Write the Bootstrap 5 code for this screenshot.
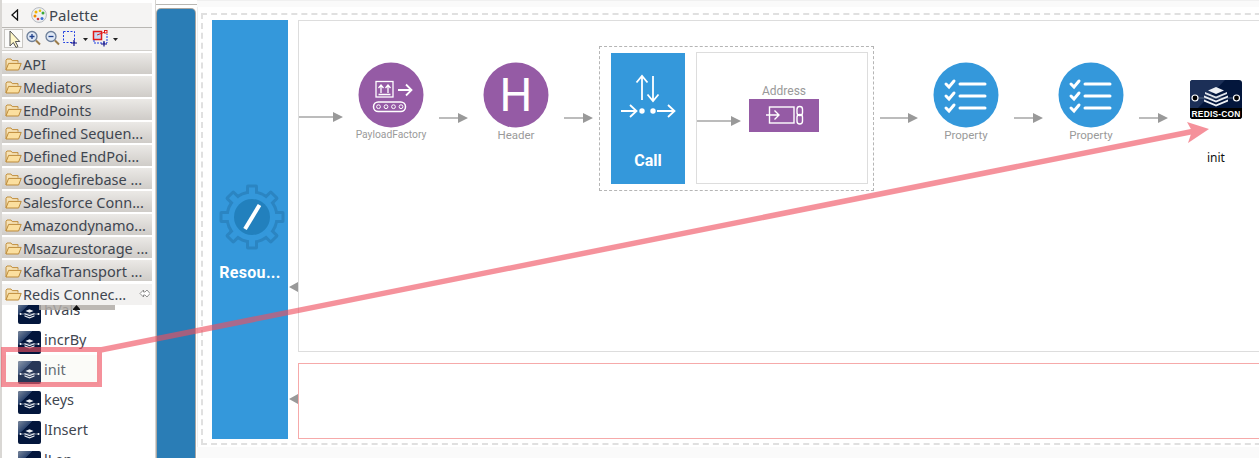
<!DOCTYPE html>
<html lang="en">
<head>
<meta charset="utf-8">
<title>Palette</title>
<link href="https://cdn.jsdelivr.net/npm/bootstrap@5.3.0/dist/css/bootstrap.min.css" rel="stylesheet">
<style>
html,body{height:458px;overflow:hidden;background:#fff}
.page-wrap{width:1259px;height:458px;font-family:"Noto Sans","Open Sans",sans-serif;color:#3f4650}
.palette{height:458px;background:#fff;border-left:2px solid #d9d7d4;overflow:hidden;flex:none;padding-right:3px;border-right:1px solid #d5d3d0;box-sizing:content-box;width:150px}
.pal-head{height:25px;margin-top:3px;background:#f5f4f3;border-bottom:1px solid #b9b7b3;font-size:15px;padding-left:9px;gap:12px}
.pal-head span{margin-left:-10px}
.pal-tools{height:23px;background:#f2f1f0;border-bottom:1px solid #d2d0cc;position:relative}
.pal-tools svg{display:block}
.drawer{height:22px;margin-top:1px;background:linear-gradient(#ebe9e6,#cfccc8);border-top:1px solid #fff;font-size:14.5px;padding:2px 0 0 3px;gap:1px;white-space:nowrap;position:relative;z-index:2}
.drawer svg{margin-top:-1px}
.drawer.is-open{background:#f2f1f0;margin-top:2px;padding-top:1px;padding-bottom:1px}
.drawer .pin-btn{position:absolute;left:137px;top:5px;margin:0}
.tool-list{margin-top:-10px;position:relative;z-index:1}
.tool-row{height:30px;padding-left:16px;gap:3px;font-size:14.5px;background:#fff}
.tool-row svg{margin-top:4px}
.tool-row.is-hover{background:#fbfbf8;color:#656b73;width:97px}
.tool-row.is-hover svg{opacity:.85}
.scroll-tip{position:absolute;left:37px;top:8px;width:76px;height:7px;background:rgba(176,172,167,.85);z-index:1}
.scroll-tip svg{position:absolute;left:34px;top:2px}
.rail{width:41px;height:451px;margin-top:4px;padding-top:4px;border-top:1px solid #b9b7b3;flex:none;background:#fff;position:relative}
.rail-fill{width:38px;height:450px;margin-left:1px;background:#2a7db6;border-radius:4px 4px 0 0;box-shadow:0 0 0 1px #a9a7a3}
.canvas{flex:1 1 auto;height:458px;overflow:hidden;background:#fafafa;padding:14px 0 0 4px;position:relative;border-top:1px solid #f0f0f0}
.canvas-sheet{position:absolute;left:0;top:6px;right:0;height:440px;background:#fff;border-left:1px solid #eee}
.dash-box{position:relative;width:1100px;height:432px;margin-top:-2px;border:2px dashed #e0e0e0;padding:5px 9px 4px;gap:10px}
.res-box{width:76px;height:419px;background:#3498db;color:#fff;font:700 16px "Roboto",sans-serif;padding-top:164px;flex:none}
.res-box svg{margin-left:7px}
.res-box div{margin-top:13px;letter-spacing:.3px}
.seq-col{width:1000px;gap:11px}
.seq-box{height:332px;border:1px solid #ddd;background:#fff;position:relative}
.fault-box{height:76px;border:1px solid #f6aaaa;background:#fff}
.node{position:absolute;width:100px;text-align:center;font:11.5px "Roboto",sans-serif;color:#9a9a9a}
.node .disc{width:66px;height:66px;margin:0 auto}
.node .cap{margin-top:0;line-height:14px}
.node.pf .cap{font-size:10.3px}
.disc-letter{font:400 46px/66px "Roboto",sans-serif;fill:#fff}
.call-group{position:absolute;left:300px;top:25px;width:275px;height:145px;border:1px dashed #b5b5b5;padding:6px 5px 5px 11px;gap:11px}
.call-box{width:74px;height:131px;background:#3498db;color:#fff;font:700 16px "Roboto",sans-serif}
.call-box div{margin-top:8px}
.end-box{width:172px;height:132px;margin-top:-1px;border:1px solid #ddd;position:relative;background:#fff}
.addr{position:absolute;left:52px;top:30px;width:70px;text-align:center;font:12px/16px "Roboto",sans-serif;color:#999}
.addr-fill{height:33px;background:#955ba5}
.redis-node{position:absolute;left:891px;top:59px;width:52px;text-align:center;font:12px "Noto Sans",sans-serif;color:#111}
.redis-node div{margin-top:32px;line-height:14px}
.top-layer{position:absolute;left:0;top:0;z-index:5;pointer-events:none}
.redis-label{font:700 8.4px "Liberation Sans",sans-serif;fill:#fff;letter-spacing:.2px}
</style>
</head>
<body class="m-0 position-relative">
<svg width="0" height="0" class="position-absolute">
  <defs>
    <linearGradient id="sheen" x1="0" y1="0" x2="1" y2="1"><stop offset="0" stop-color="#7d8ba0"/><stop offset=".5" stop-color="#27406b"/><stop offset=".5" stop-color="#03163c"/></linearGradient>
    <symbol id="fold" viewBox="0 0 17 13">
      <path d="M1 12V2.200L2 1h4l1.200 1.600H13v2" fill="#f7e2b5" stroke="#c08f3e"/>
      <path d="M1 12l2.600-6.600h12.600L13.600 12z" fill="#fbdf9f" stroke="#bd8a39"/>
    </symbol>
    <symbol id="redis-mini" viewBox="0 0 23 23">
      <rect width="23" height="23" rx="2" fill="#03163c"/>
      <path d="M0 2Q0 0 2 0h13L0 14z" fill="url(#sheen)"/>
      <path d="M2 13h19" stroke="#aab3c2" stroke-width=".7"/>
      <circle cx="2.500" cy="13" r="1" fill="#fff"/><circle cx="20.500" cy="13" r="1" fill="#fff"/>
      <path d="M7.500 10l4-1.800 4 1.800-4 1.800zM6.500 12l5 2 5-2v1.200l-5 2-5-2zM6.500 14.200l5 2 5-2v1.200l-5 2-5-2z" fill="#e8ebf0"/>
    </symbol>
    <symbol id="prop" viewBox="0 0 66 66">
      <circle cx="33" cy="33" r="32.500" fill="#3498db"/>
      <g fill="none" stroke="#fff" stroke-linecap="round">
        <path d="M13 22l3 3 5-6M13 34l3 3 5-6M13 46l3 3 5-6" stroke-width="3"/>
        <path d="M27 22h25M27 34h25M27 46h25" stroke-width="3"/>
      </g>
    </symbol>
  </defs>
</svg>

<div class="page-wrap d-flex">
  <aside class="palette">
    <div class="pal-head d-flex align-items-center">
      <svg width="8" height="12" viewBox="0 0 8 12"><path d="M6.500 1L1 6l5.500 5z" fill="#fff" stroke="#111" stroke-width="1.300"/></svg>
      <svg width="16" height="16" viewBox="0 0 16 16"><circle cx="8" cy="8" r="7.400" fill="#eef0f2" stroke="#b5b9bf"/><circle cx="5" cy="5" r="1.500" fill="#f1b400"/><circle cx="9" cy="3.800" r="1.300" fill="#e2c400"/><circle cx="12" cy="6" r="1.500" fill="#39a838"/><circle cx="4" cy="9" r="1.500" fill="#f08a00"/><circle cx="7" cy="12" r="1.300" fill="#d43a3a"/><circle cx="11" cy="11.500" r="1.500" fill="#3a6fd4"/></svg>
      <span>Palette</span>
    </div>
    <div class="pal-tools">
      <svg width="118" height="22" viewBox="0 0 118 22">
        <rect x="2.500" y="1.500" width="18" height="18" fill="#fbfbfa" stroke="#c9c7c3"/>
        <path d="M8 3v15l3.300-3.500 2.700 5 2-1-2.700-5h4.500z" fill="#fff8c9" stroke="#555"/>
        <g fill="none" transform="translate(0 1)"><circle cx="30" cy="7.500" r="5" fill="#dfe8f5" stroke="#6d7f99" stroke-width="1.300"/><path d="M34 11.500l4 4" stroke="#9a7b4a" stroke-width="2"/><path d="M27.500 7.500h5M30 5v5" stroke="#1e3f8a" stroke-width="1.300"/>
        <circle cx="49" cy="7.500" r="5" fill="#dfe8f5" stroke="#6d7f99" stroke-width="1.300"/><path d="M53 11.500l4 4" stroke="#9a7b4a" stroke-width="2"/><path d="M46.500 7.500h5" stroke="#1e3f8a" stroke-width="1.300"/></g>
        <g fill="none"><rect x="61.500" y="3.500" width="11" height="11" stroke="#1f3fe0" stroke-dasharray="2 1.500"/><path d="M72 12v6M69 15h6" stroke="#14148a" stroke-width="1.200"/></g>
        <path d="M81 10h5l-2.500 3z" fill="#222"/>
        <g fill="none"><rect x="91.500" y="3.500" width="8" height="8" fill="#c8d8f4" stroke="#e01818" stroke-width="1.500"/><rect x="102.500" y="2.500" width="2.500" height="2.500" stroke="#e01818"/><path d="M95 7l8-3" stroke="#e01818"/><path d="M92 12v3h13V6" stroke="#1f3fe0" stroke-dasharray="2 1"/><path d="M102 13v5.500M99 16h6" stroke="#14148a" stroke-width="1.200"/></g>
        <path d="M111 10h5l-2.500 3z" fill="#222"/>
      </svg>
    </div>
    <div class="drawer d-flex align-items-center"><svg width="17" height="13"><use href="#fold"/></svg>API</div>
    <div class="drawer d-flex align-items-center"><svg width="17" height="13"><use href="#fold"/></svg>Mediators</div>
    <div class="drawer d-flex align-items-center"><svg width="17" height="13"><use href="#fold"/></svg>EndPoints</div>
    <div class="drawer d-flex align-items-center"><svg width="17" height="13"><use href="#fold"/></svg>Defined Sequen...</div>
    <div class="drawer d-flex align-items-center"><svg width="17" height="13"><use href="#fold"/></svg>Defined EndPoi...</div>
    <div class="drawer d-flex align-items-center"><svg width="17" height="13"><use href="#fold"/></svg>Googlefirebase ...</div>
    <div class="drawer d-flex align-items-center"><svg width="17" height="13"><use href="#fold"/></svg>Salesforce Conn...</div>
    <div class="drawer d-flex align-items-center"><svg width="17" height="13"><use href="#fold"/></svg>Amazondynamo...</div>
    <div class="drawer d-flex align-items-center"><svg width="17" height="13"><use href="#fold"/></svg>Msazurestorage ...</div>
    <div class="drawer d-flex align-items-center"><svg width="17" height="13"><use href="#fold"/></svg>KafkaTransport ...</div>
    <div class="drawer is-open d-flex align-items-center"><svg width="17" height="13"><use href="#fold"/></svg>Redis Connec...
      <svg class="pin-btn" width="11" height="9" viewBox="0 0 11 9"><path d="M4.500 1L1 4.500 4.500 8V6H6L8 8l3-3.500L8 1 6 3H4.500z" fill="#fff" stroke="#777" stroke-width=".8"/></svg>
    </div>
    <div class="tool-list">
      <div class="scroll-tip"><svg width="7" height="5" viewBox="0 0 7 5"><path d="M3.500 0L7 4v1H0V4z" fill="#111"/></svg></div>
      <div class="tool-row d-flex align-items-center"><svg width="23" height="23"><use href="#redis-mini"/></svg>hVals</div>
      <div class="tool-row d-flex align-items-center"><svg width="23" height="23"><use href="#redis-mini"/></svg>incrBy</div>
      <div class="tool-row is-hover d-flex align-items-center"><svg width="23" height="23"><use href="#redis-mini"/></svg>init</div>
      <div class="tool-row d-flex align-items-center"><svg width="23" height="23"><use href="#redis-mini"/></svg>keys</div>
      <div class="tool-row d-flex align-items-center"><svg width="23" height="23"><use href="#redis-mini"/></svg>lInsert</div>
      <div class="tool-row d-flex align-items-center"><svg width="23" height="23"><use href="#redis-mini"/></svg>lLen</div>
    </div>
  </aside>

  <div class="rail"><div class="rail-fill"></div></div>

  <main class="canvas">
    <div class="canvas-sheet"></div>
    <div class="dash-box d-flex">
      <div class="res-box text-center">
        <svg width="66" height="66" viewBox="-33 -33 66 66" class="d-block">
          <g fill="#2b85c2">
            <circle r="26.500"/>
            <rect x="-6" y="-32.500" width="12" height="12" rx="2"/>
            <rect x="-6" y="-32.500" width="12" height="12" rx="2" transform="rotate(45)"/>
            <rect x="-6" y="-32.500" width="12" height="12" rx="2" transform="rotate(90)"/>
            <rect x="-6" y="-32.500" width="12" height="12" rx="2" transform="rotate(135)"/>
            <rect x="-6" y="-32.500" width="12" height="12" rx="2" transform="rotate(180)"/>
            <rect x="-6" y="-32.500" width="12" height="12" rx="2" transform="rotate(225)"/>
            <rect x="-6" y="-32.500" width="12" height="12" rx="2" transform="rotate(270)"/>
            <rect x="-6" y="-32.500" width="12" height="12" rx="2" transform="rotate(315)"/>
          </g>
          <g fill="#3498db">
            <circle r="23.500"/>
            <rect x="-3" y="-29.500" width="6" height="10"/>
            <rect x="-3" y="-29.500" width="6" height="10" transform="rotate(45)"/>
            <rect x="-3" y="-29.500" width="6" height="10" transform="rotate(90)"/>
            <rect x="-3" y="-29.500" width="6" height="10" transform="rotate(135)"/>
            <rect x="-3" y="-29.500" width="6" height="10" transform="rotate(180)"/>
            <rect x="-3" y="-29.500" width="6" height="10" transform="rotate(225)"/>
            <rect x="-3" y="-29.500" width="6" height="10" transform="rotate(270)"/>
            <rect x="-3" y="-29.500" width="6" height="10" transform="rotate(315)"/>
          </g>
          <circle r="18" fill="#2280bd"/>
          <path d="M-7 12L7.500-12" stroke="#fff" stroke-width="4"/>
        </svg>
        <div>Resou...</div>
      </div>
      <div class="seq-col d-flex flex-column">
        <div class="seq-box">
          <div class="node pf" style="left:42px;top:41px">
            <svg class="disc d-block" viewBox="0 0 66 66">
              <circle cx="33" cy="33" r="32.500" fill="#955ba5"/>
              <g fill="none" stroke="#fff">
                <rect x="18" y="19.500" width="17" height="15.500" stroke-width="1.300"/>
                <path d="M23 31v-7M20.500 26l2.500-3 2.500 3M30 31v-7M27.500 26l2.500-3 2.500 3M20.500 32.500h12" stroke-width="1.300"/>
                <path d="M40 28h13M48 22.500l5.500 5.500-5.500 5.500" stroke-width="1.800"/>
                <rect x="15.500" y="40" width="32" height="9.500" rx="4.700" stroke-width="1.500"/>
                <circle cx="20.500" cy="44.700" r="1.900"/><circle cx="28" cy="44.700" r="1.900"/><circle cx="35.500" cy="44.700" r="1.900"/><circle cx="43" cy="44.700" r="1.900"/>
              </g>
            </svg>
            <div class="cap">PayloadFactory</div>
          </div>
          <div class="node" style="left:167px;top:41px">
            <svg class="disc d-block" viewBox="0 0 66 66">
              <circle cx="33" cy="33" r="32.500" fill="#955ba5"/>
              <text x="33" y="49" text-anchor="middle" class="disc-letter">H</text>
            </svg>
            <div class="cap">Header</div>
          </div>
          <div class="call-group d-flex">
            <div class="call-box text-center">
              <svg width="74" height="90" viewBox="0 0 74 90" class="d-block">
                <g fill="none" stroke="#fff" stroke-width="1.800">
                  <path d="M31 47V23M25.500 29.500L31 23l5.500 6.500"/>
                  <path d="M42 23v25M36.500 41.500L42 48l5.500-6.500"/>
                  <path d="M10 58h15M19 52l6.500 6-6.500 6"/>
                  <path d="M46 58h17M57 52l6.500 6-6.500 6"/>
                </g>
                <circle cx="31" cy="58" r="2.700" fill="#fff"/><circle cx="42" cy="58" r="2.700" fill="#fff"/>
              </svg>
              <div>Call</div>
            </div>
            <div class="end-box">
              <div class="addr">Address
                <div class="addr-fill">
                  <svg width="70" height="33" viewBox="0 0 70 33" class="d-block">
                    <g fill="none" stroke="#fff" stroke-width="1.400">
                      <rect x="20.500" y="8" width="24.500" height="16"/>
                      <path d="M17 16h13M25.500 11.500L30 16l-4.500 4.500"/>
                      <rect x="48" y="7.500" width="5.500" height="9" rx="2.700"/>
                      <rect x="48" y="15.500" width="5.500" height="9.500" rx="2.700"/>
                    </g>
                  </svg>
                </div>
              </div>
            </div>
          </div>
          <div class="node" style="left:617px;top:41px">
            <svg class="disc d-block"><use href="#prop"/></svg>
            <div class="cap">Property</div>
          </div>
          <div class="node" style="left:742px;top:41px">
            <svg class="disc d-block"><use href="#prop"/></svg>
            <div class="cap">Property</div>
          </div>
          <div class="redis-node">
            <svg width="52" height="39" viewBox="0 0 52 39" class="d-block">
              <rect width="52" height="39" rx="3" fill="#03163c"/>
              <path d="M0 3q0-3 3-3h32L8 28H0z" fill="#1c2f57"/>
              <path d="M0 28h52v8q0 3-3 3H3q-3 0-3-3z" fill="#000"/>
              <path d="M5 18h42" stroke="#6a7893" stroke-width=".8"/>
              <circle cx="5" cy="18" r="3" fill="#000" stroke="#fff" stroke-width="1.200"/>
              <circle cx="46.500" cy="18" r="3" fill="#000" stroke="#fff" stroke-width="1.200"/>
              <path d="M18 10.500l8-3.500 8 3.500-8 3.500zM14 15.500l12 5 12-5v2l-12 5-12-5zM14 19.500l12 5 12-5v2l-12 5-12-5z" fill="#eef0f4"/>
              <path d="M15 12l11 4.500L37 12v2l-11 4.500L15 14z" fill="#dfe3ea"/>
              <text x="26" y="36.500" text-anchor="middle" class="redis-label">REDIS-CON</text>
            </svg>
            <div>init</div>
          </div>
        </div>
        <div class="fault-box"></div>
      </div>
    </div>
  </main>
</div>

<svg class="top-layer" width="1259" height="458" viewBox="0 0 1259 458">
  <g stroke="#bcbcbc" stroke-width="2">
    <path d="M299 117h34M439 118h19M564 118h19M697 121h34M880 118h28M1014 118h19M1139 118h19"/>
  </g>
  <g fill="#999">
    <path d="M333 112l10 5-10 5zM458 113l10 5-10 5zM583 113l10 5-10 5zM731 116l10 5-10 5zM908 113l10 5-10 5zM1033 113l10 5-10 5zM1158 113l10 5-10 5z"/>
    <path d="M298 282l-9 5 9 5zM298 394l-9 5 9 5z"/>
  </g>
  <g opacity=".62">
    <path d="M98 350.500L1195 131" fill="none" stroke="#ef4f5f" stroke-width="5.500"/>
    <path d="M1187 122l22 7-21 14 4-12z" fill="#ef4f5f"/>
    <path d="M3.500 349.500h96v35h-96z" fill="none" stroke="#ef4f5f" stroke-width="5"/>
  </g>
</svg>
</body>
</html>
